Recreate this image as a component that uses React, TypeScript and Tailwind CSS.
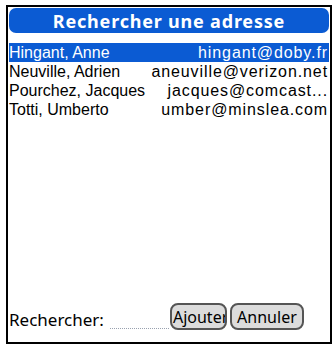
import React from 'react';

const rows = [
  { name: 'Hingant, Anne', email: 'hingant@doby.fr', selected: true },
  { name: 'Neuville, Adrien', email: 'aneuville@verizon.net' },
  { name: 'Pourchez, Jacques', email: 'jacques@comcast...' },
  { name: 'Totti, Umberto', email: 'umber@minslea.com' },
];

const App: React.FC = () => {
  return (
    <div className="w-[334px] h-[348px] bg-white pt-[5px] pl-[6px] pr-[2px] pb-[4px]" style={{ fontFamily: '"Noto Sans", "DejaVu Sans", sans-serif' }}>
      <div className="h-full border-2 border-black flex flex-col px-[1px] pt-[1px]">
        {/* Title bar */}
        <div className="h-[25px] bg-[#0b5bd3] rounded-[7px] flex items-center justify-center text-white font-bold text-[18px] tracking-[0.8px] leading-none">
          Rechercher une adresse
        </div>

        {/* List */}
        <div className="mt-[10px] flex flex-col font-['Liberation_Sans',Arial,sans-serif]">
          {rows.map((row) => (
            <div
              key={row.name}
              className={`h-[19px] flex items-center justify-between pr-[1px] text-[16px] leading-[18px] ${
                row.selected ? 'bg-[#0b5bd3] text-white' : 'text-black'
              }`}
            >
              <span>{row.name}</span>
              <span className="tracking-[0.9px]">{row.email}</span>
            </div>
          ))}
        </div>

        {/* Bottom */}
        <div className="mt-auto mb-[12px] flex items-end">
          <span className="text-[17px] leading-none mb-[2px]">Rechercher:</span>
          <div className="w-[59px] ml-[6px] mb-[1px] border-b border-dotted border-gray-400 h-[12px]" />
          <button className="ml-[1px] h-[27px] px-[1px] bg-[#dcdcdc] border-2 border-[#555] rounded-[8px] text-[16px] leading-none overflow-hidden w-[57px] text-left">
            Ajouter
          </button>
          <button className="ml-[3px] h-[27px] w-[74px] bg-[#dcdcdc] border-2 border-[#555] rounded-[8px] text-[16px] leading-none">
            Annuler
          </button>
        </div>
      </div>
    </div>
  );
};

export default App;
